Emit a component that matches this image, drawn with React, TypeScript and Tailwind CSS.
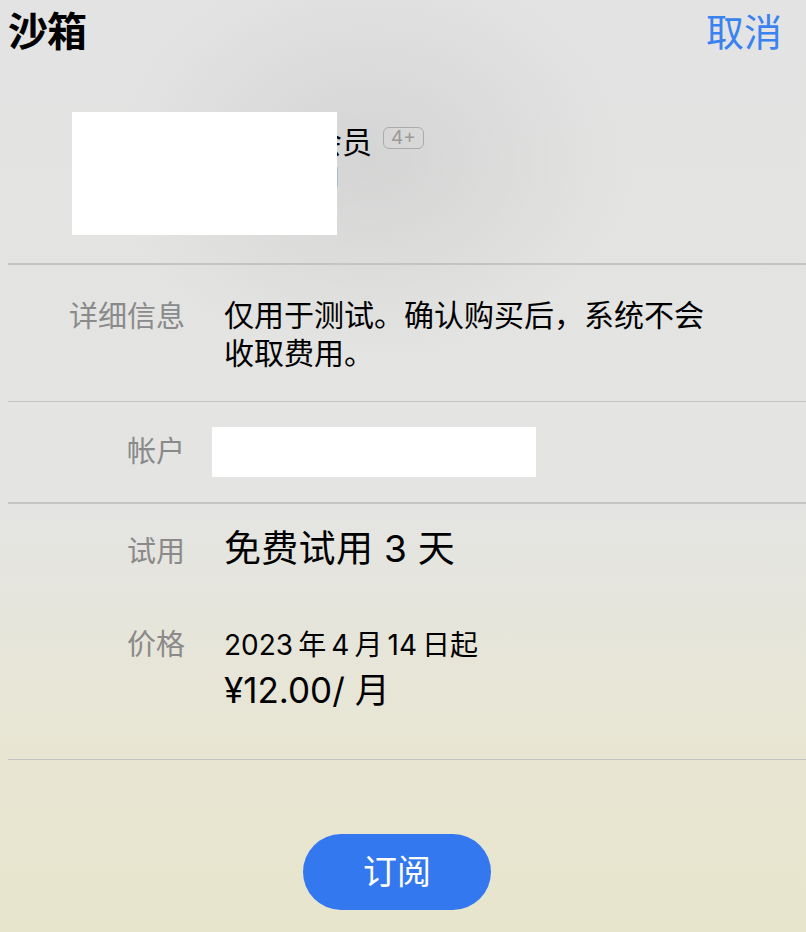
import React from "react";

const font = { fontFamily: 'Inter, "Noto Sans CJK SC", "Noto Sans", sans-serif' };

export default function App() {
  return (
    <div
      className="relative w-[806px] h-[932px] overflow-hidden text-black bg-[linear-gradient(180deg,#e3e3e3_0%,#e4e4e2_55%,#e8e6d3_80%,#e7e5cc_100%)]"
      style={font}
    >
      <div className="pointer-events-none absolute inset-0 bg-[radial-gradient(ellipse_260px_200px_at_370px_160px,rgba(200,200,200,0.55),rgba(200,200,200,0))]" />
      <div className="relative flex flex-col">
        {/* Header */}
        <div className="flex items-start justify-between pl-[8px] pr-[24px] pt-[4px] h-[112px]">
          <div className="text-[40px] leading-[56px] font-bold tracking-[-1px]">沙箱</div>
          <div className="text-[38px] leading-[56px] text-[#3a83ef]">取消</div>
        </div>

        {/* Product */}
        <div className="relative h-[151px]">
          <div className="pl-[312px] pt-[11px] flex items-center gap-[11px]">
            <span className="text-[30px] leading-[38px]">会员</span>
            <span className="mt-[-8px] text-[19px] leading-[20px] text-[#9a9a9a] border-[1.5px] border-[#ababab] rounded-[6px] w-[41px] h-[22px] flex items-center justify-center">4+</span>
          </div>
          <div className="pl-[292px] text-[24px] leading-[34px] text-[#8e8e8e]">试用</div>
          <div className="absolute left-[72px] top-0 w-[265px] h-[123px] bg-white" />
        </div>

        <div className="ml-[8px] h-[1.5px] bg-[#c4c4c4]" />

        {/* Details */}
        <div className="grid grid-cols-[177px_1fr] gap-x-[39px] ml-[8px] pt-[31px] pb-[29px]">
          <div className="text-right text-[29px] leading-[38px] text-[#8a8a8a] pt-[2px]">详细信息</div>
          <div className="text-[30px] leading-[38px]">
            仅用于测试。确认购买后，系统不会
            <br />
            收取费用。
          </div>
        </div>

        <div className="ml-[8px] h-[1.5px] bg-[#c4c4c4]" />

        {/* Account */}
        <div className="grid grid-cols-[177px_1fr] gap-x-[27px] ml-[8px] py-[25px] items-center">
          <div className="text-right text-[29px] leading-[38px] text-[#8a8a8a]">帐户</div>
          <div className="w-[324px] h-[50px] bg-white" />
        </div>

        <div className="ml-[8px] h-[1.5px] bg-[#c4c4c4]" />

        {/* Trial & price */}
        <div className="grid grid-cols-[177px_1fr] gap-x-[39px] ml-[8px] pt-[22px] pb-[47px] items-baseline">
          <div className="text-right text-[29px] leading-[46px] text-[#8a8a8a]">试用</div>
          <div className="text-[37px] leading-[46px] tracking-[0.3px]">免费试用 3 天</div>
          <div className="text-right text-[29px] leading-[38px] text-[#8a8a8a] mt-[51px]">价格</div>
          <div className="mt-[51px] flex flex-col">
            <div className="text-[28px] leading-[38px]">{"2023\u2009年\u20094\u2009月\u200914\u2009日起"}</div>
            <div className="text-[35px] leading-[44px] mt-[4px]">¥12.00/ 月</div>
          </div>
        </div>

        <div className="ml-[8px] h-[1.5px] bg-[#c4c4c4]" />

        {/* Button */}
        <div className="flex justify-center pr-[12px] pt-[74px]">
          <button className="w-[188px] h-[76px] rounded-full bg-[#3478f0] text-white text-[34px] leading-[76px]">
            订阅
          </button>
        </div>
      </div>
    </div>
  );
}
